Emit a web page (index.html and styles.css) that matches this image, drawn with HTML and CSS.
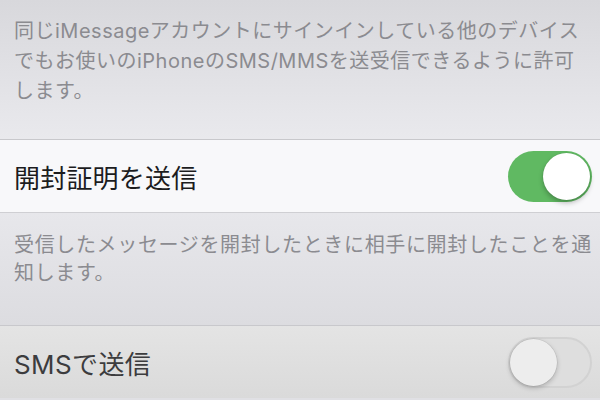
FILE: index.html
```html
<!DOCTYPE html>
<html lang="ja">
<head>
<meta charset="utf-8">
<link rel="stylesheet" href="styles.css">
</head>
<body>
<div class="screen">
  <div class="footer footer-top">
    <p class="note">同じiMessageアカウントにサインインしている他のデバイス<br>でもお使いのiPhoneのSMS/MMSを送受信できるように許可<br>します。</p>
  </div>
  <div class="row row-on">
    <span class="title">開封証明を送信</span>
    <span class="toggle on"><span class="knob"></span></span>
  </div>
  <div class="footer footer-mid">
    <p class="note note-tight">受信したメッセージを開封したときに相手に開封したことを通<br>知します。</p>
  </div>
  <div class="row row-off">
    <span class="title dim">SMSで送信</span>
    <span class="toggle off"><span class="knob"></span></span>
  </div>
</div>
</body>
</html>
```

FILE: styles.css
```css
html, body {
  margin: 0;
  padding: 0;
}
body {
  width: 600px;
  height: 400px;
  overflow: hidden;
  font-family: "Inter", "Noto Sans CJK JP", sans-serif;
  background: #e0e0e4;
}
.screen {
  display: flex;
  flex-direction: column;
  width: 600px;
  height: 400px;
}
.footer {
  box-sizing: border-box;
  padding: 0 14px;
  flex: none;
}
.footer-top {
  height: 139px;
  padding-top: 16px;
  background: linear-gradient(#d8d8dc, #e9e9ed);
}
.footer-mid {
  height: 112px;
  padding-top: 18px;
  background: linear-gradient(#e7e7eb, #dcdce0);
}
.note {
  margin: 0;
  font-size: 20px;
  line-height: 30px;
  color: #8b8b90;
  white-space: nowrap;
  letter-spacing: 0.5px;
}
.note-tight {
  line-height: 28px;
  letter-spacing: 0.65px;
}
.row {
  box-sizing: border-box;
  flex: none;
  display: flex;
  align-items: center;
  justify-content: space-between;
  padding: 0 8px 0 14px;
  border-top: 1px solid #c8c8cc;
}
.row-on {
  height: 74px;
  background: #f8f8fa;
  border-bottom: 1px solid #cfcfd3;
}
.row-off {
  height: 73px;
  background: linear-gradient(#e4e4e4, #dadada);
}
.title {
  font-size: 26px;
  color: #1c1c1e;
  letter-spacing: 0.2px;
}
.title.dim {
  color: #3c3c3e;
  letter-spacing: 0.4px;
}
.toggle {
  position: relative;
  box-sizing: border-box;
  width: 84px;
  height: 51px;
  border-radius: 26px;
  display: block;
}
.toggle.on {
  background: #60b962;
}
.toggle.off {
  background: #dedede;
  border: 2px solid #d2d2d2;
}
.knob {
  position: absolute;
  top: 2px;
  width: 47px;
  height: 47px;
  border-radius: 50%;
  background: #ffffff;
  box-shadow: 0 3px 5px rgba(0, 0, 0, 0.25), 0 0 0 0.5px rgba(0, 0, 0, 0.08);
}
.toggle.on .knob {
  right: 2px;
}
.toggle.off .knob {
  top: 0;
  left: 0;
  background: #ededed;
  box-shadow: 0 2px 5px rgba(0, 0, 0, 0.22), 0 0 0 0.5px rgba(0, 0, 0, 0.1);
}
```
